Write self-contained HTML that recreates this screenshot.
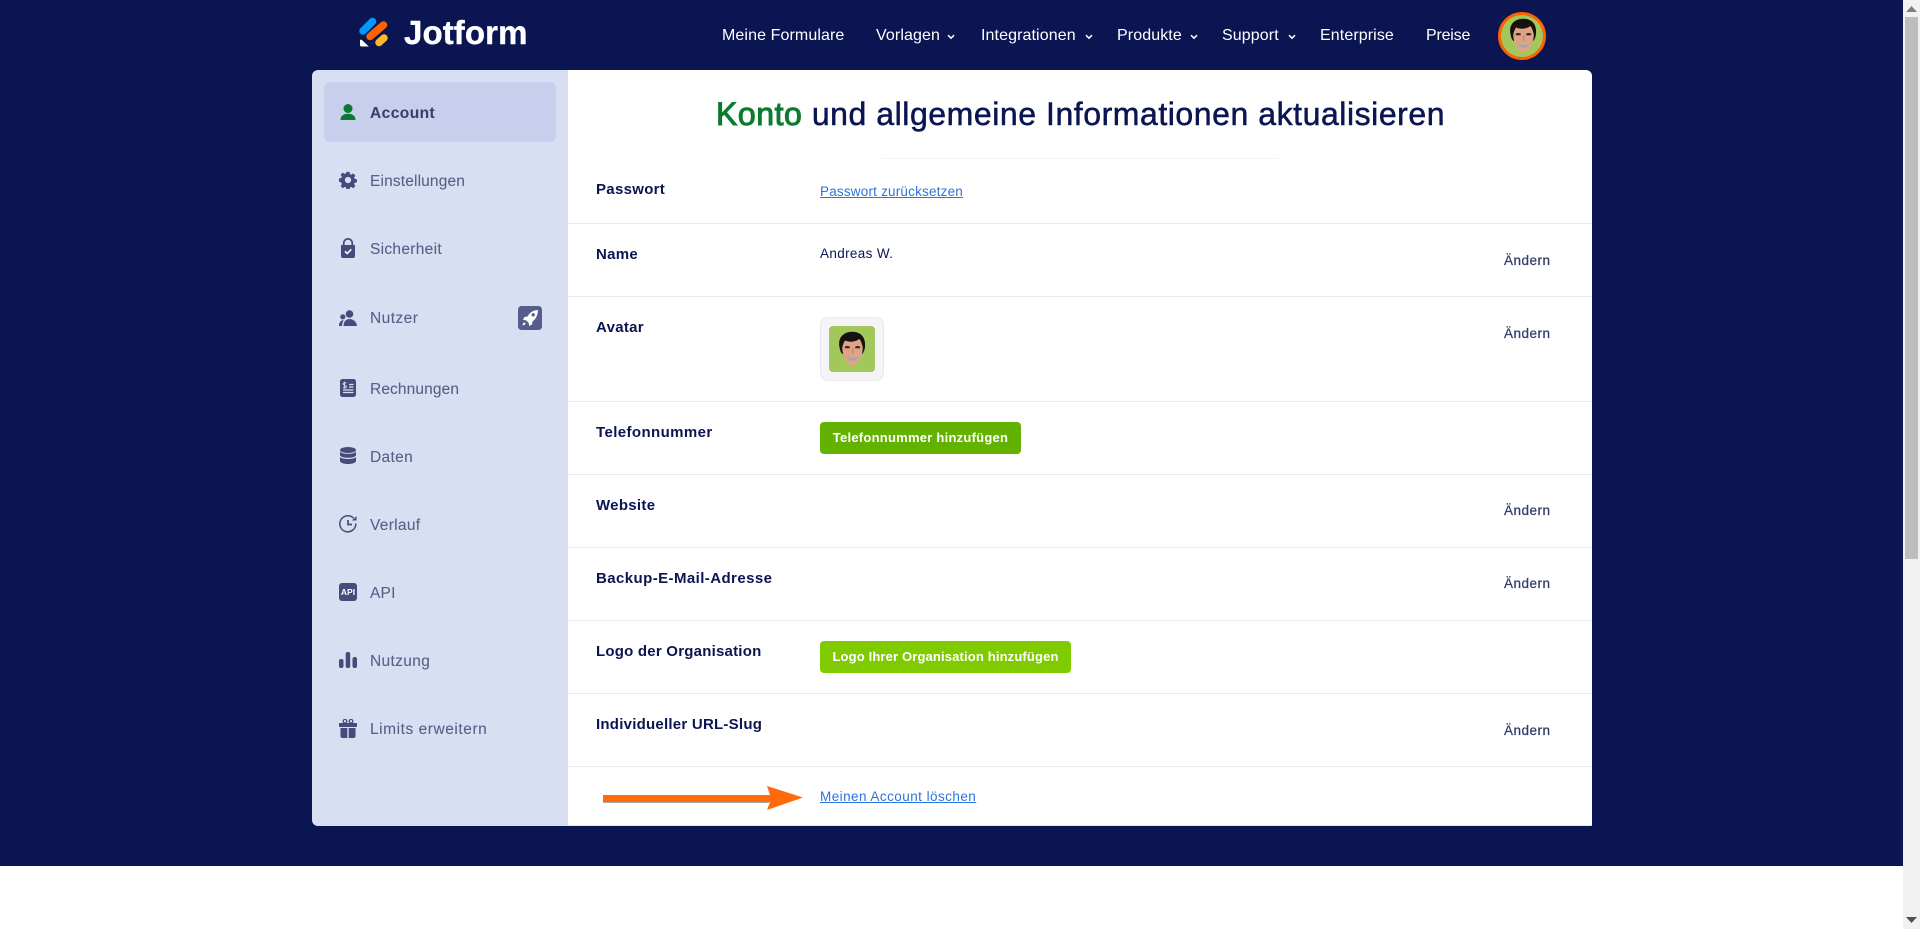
<!DOCTYPE html>
<html lang="de">
<head>
<meta charset="utf-8">
<title>Jotform Konto</title>
<style>
html,body{margin:0;padding:0;width:1920px;height:929px;overflow:hidden;background:#fff;font-family:"Liberation Sans",sans-serif;color:#0a1551}
*{box-sizing:border-box}
.abs,.nav a,.side span,.lb,.val,.chg,.btn{position:absolute;white-space:nowrap}
#bg{position:absolute;left:0;top:0;width:1903px;height:866px;background:#0a1551}
.sb{position:absolute;left:1903px;top:0;width:17px;height:929px;background:#f1f1f1}
.thumb{position:absolute;left:2px;top:17px;width:13px;height:542px;background:#bdbdbd}
.nav a{color:#fff;font-size:16px;letter-spacing:.1px;line-height:20px;top:26px;text-decoration:none}
.chev{position:absolute;top:33px}
.side{position:absolute;left:312px;top:70px;width:256px;height:756px;background:#d9dff2;border-radius:6px 0 0 6px}
.active{position:absolute;left:12px;top:12px;width:232px;height:60px;background:#c8cfed;border-radius:6px}
.it{position:absolute;left:370px;color:#5a5f88;font-size:15.5px;letter-spacing:.2px;line-height:20px;white-space:nowrap;-webkit-text-stroke:.1px currentColor}
.main{position:absolute;left:568px;top:70px;width:1024px;height:756px;background:#fff;border-radius:0 6px 1px 0;border-bottom:1px solid #e9e9ee}
h1{position:absolute;margin:0;left:716px;top:94px;font-size:32px;line-height:40px;font-weight:400;letter-spacing:.55px;-webkit-text-stroke:.5px currentColor;white-space:nowrap;color:#0a1551}
h1 b{font-weight:400;color:#0a7b2f;-webkit-text-stroke:1px #0a7b2f}
.hl{position:absolute;left:881px;top:158px;width:397px;height:1px;background:#f3f3f3}
.ln{position:absolute;left:568px;width:1024px;height:1px;background:#e8e9f2}
.lb{left:596px;font-size:15px;font-weight:700;letter-spacing:.3px;line-height:20px}
.val{left:820px;font-size:13.5px;letter-spacing:.2px;line-height:18px}
.val.a{color:#2a74dd;text-decoration:underline}
.chg{left:1504px;font-size:13.5px;letter-spacing:.5px;line-height:18px;color:#343c6a;-webkit-text-stroke:.25px currentColor}
.btn{left:820px;height:32px;border-radius:4px;color:#fff;font-size:13px;font-weight:700;line-height:32px;text-align:center}
.av{position:absolute;left:820px;top:317px;width:64px;height:64px;background:#f3f3f8;border:1px solid #e8e9f0;border-radius:8px}
.ic{position:absolute;fill:#454b7a}
</style>
</head>
<body>
<svg width="0" height="0" style="position:absolute">
<symbol id="face" viewBox="0 0 46 46">
<path d="M10.300 20C9 11 15 5.800 23 5.700 31.500 5.500 37 11 36 21 35.600 24 34.500 27 33 28H13.500C12 27 10.800 24 10.300 20Z" fill="#17120f"/>
<path d="M13.300 21C14 18.500 14.800 16.500 16 14.500 20.500 16.500 26.500 16 30.500 13 32 15 33 18 33.700 21 34.200 27 31 33.500 28.500 37 26.500 40.200 21.500 40.600 19 37.600 15.500 33.500 13 27 13.300 21Z" fill="#dfa488"/>
<path d="M15.800 20.800c1.500-1 3.500-1 5 0v1.400h-5zM26.200 20.800c1.500-1 3.500-1 5 0v1.400h-5z" fill="#3a2620"/>
<path d="M23.700 22v6" stroke="#c0856c" stroke-width="1.200" fill="none"/>
<path d="M18.200 30.500c3 1.800 7.600 1.800 10.800 0-.8 3.300-3 4.300-5.500 4.300S19 33.800 18.200 30.500Z" fill="#a4a5ac"/>
</symbol>
</svg>

<div id="bg"></div>

<svg class="abs" style="left:358px;top:15px" width="32" height="34" viewBox="358 15 32 34">
<path d="M363 31 372.500 21.500" stroke="#0099ff" stroke-width="7.500" stroke-linecap="round"/>
<path d="M370 36.500 383.500 25" stroke="#ff6100" stroke-width="7.500" stroke-linecap="round"/>
<path d="M379 42.500 384 38" stroke="#ffb629" stroke-width="7.500" stroke-linecap="round"/>
<path d="M360 40.500c0-.8 1-1.300 1.800-.6l7 6.600H361.500C360.500 46.500 360 46 360 45Z" fill="#fff"/>
</svg>
<div class="abs" style="left:404px;top:12px;font-size:33px;font-weight:700;line-height:42px;color:#fff;letter-spacing:.1px;-webkit-text-stroke:.4px #fff">Jotform</div>

<div class="nav">
<a style="left:722px">Meine Formulare</a>
<a style="left:876px">Vorlagen</a>
<a style="left:981px">Integrationen</a>
<a style="left:1117px">Produkte</a>
<a style="left:1222px">Support</a>
<a style="left:1320px">Enterprise</a>
<a style="left:1426px;letter-spacing:-.2px">Preise</a>
</div>
<svg class="chev" style="left:945px" width="12" height="8" viewBox="0 0 12 8"><path d="M3 2.200 6 5.200 9 2.200" stroke="#fff" stroke-width="1.500" fill="none"/></svg>
<svg class="chev" style="left:1083px" width="12" height="8" viewBox="0 0 12 8"><path d="M3 2.200 6 5.200 9 2.200" stroke="#fff" stroke-width="1.500" fill="none"/></svg>
<svg class="chev" style="left:1188px" width="12" height="8" viewBox="0 0 12 8"><path d="M3 2.200 6 5.200 9 2.200" stroke="#fff" stroke-width="1.500" fill="none"/></svg>
<svg class="chev" style="left:1286px" width="12" height="8" viewBox="0 0 12 8"><path d="M3 2.200 6 5.200 9 2.200" stroke="#fff" stroke-width="1.500" fill="none"/></svg>

<div class="abs" style="left:1498px;top:12px;width:48px;height:48px;border-radius:50%;background:#a2c85c;border:3px solid #ff6100;overflow:hidden">
<svg style="position:absolute;left:-1px;top:-2px" width="46" height="46"><use href="#face"/></svg>
</div>

<div class="side"><div class="active"></div></div>
<div class="main"></div>

<!-- sidebar -->
<svg class="ic" style="left:339px;top:103px;fill:#0a7b2f" width="18" height="18" viewBox="0 0 18 18"><circle cx="9" cy="5.500" r="4.500"/><path d="M1.500 17c0-4 3-6.200 7.500-6.200S16.500 13 16.500 17Z"/></svg>
<div class="it" style="top:104px;color:#3a3f6b;font-weight:700;letter-spacing:.45px">Account</div>

<svg class="ic" style="left:339px;top:171px" width="18" height="18" viewBox="0 0 18 18"><path fill-rule="evenodd" d="M7.300 0h3.400l.5 2.500 1.400.6 2.200-1.400 2.400 2.400-1.400 2.200.6 1.400 2.500.5v3.400l-2.500.5-.6 1.400 1.400 2.200-2.400 2.400-2.200-1.400-1.400.6-.5 2.500H7.300l-.5-2.500-1.400-.6-2.200 1.400-2.400-2.400 1.400-2.200-.6-1.400L-1 10.700V7.300l2.500-.5.6-1.400L.7 3.200l2.400-2.400 2.200 1.400 1.400-.6ZM9 5.500a3.500 3.500 0 1 0 0 7 3.500 3.500 0 0 0 0-7Z" transform="translate(.9 .9) scale(.9)"/></svg>
<div class="it" style="top:172px;letter-spacing:.15px">Einstellungen</div>

<svg class="ic" style="left:339px;top:238px" width="18" height="20" viewBox="0 0 18 20"><path fill-rule="evenodd" d="M3.800 7V5.200a5.200 5.200 0 0 1 10.400 0V7H16v11a2 2 0 0 1-2 2H4a2 2 0 0 1-2-2V7ZM5.600 7h6.800V5.200a3.400 3.400 0 0 0-6.800 0Z"/><path d="M6 13.300l2.200 2.200L12.300 11.300" stroke="#fff" stroke-width="1.500" fill="none"/></svg>
<div class="it" style="top:240px;letter-spacing:.3px">Sicherheit</div>

<svg class="ic" style="left:339px;top:310px" width="18" height="16" viewBox="0 0 18 16"><circle cx="10.500" cy="4" r="3.800"/><path d="M4.500 16c0-4.500 2.500-7 6-7s7 2.500 7.500 7Z"/><circle cx="3.800" cy="6.800" r="2.600"/><path d="M0 16c0-3.500 1.500-5.500 4.800-6-1 1.500-1.800 3.500-1.800 6Z"/></svg>
<div class="it" style="top:309px;letter-spacing:.45px">Nutzer</div>

<svg class="ic" style="left:518px;top:306px;fill:#565d8c" width="24" height="24" viewBox="0 0 24 24"><rect width="24" height="24" rx="3.500"/><path d="M20 4c-5 .300-8 2.300-10.500 6.500L6.500 11 5 14l3 .2 2.800 2.800.2 3 3-1.500.5-3C18 13 19.800 9 20 4Z" fill="#fff"/><circle cx="15.200" cy="8.800" r="1.700" fill="#565d8c"/><path d="M6 16.500c.9 0 1.500.6 1.500 1.500-.5.700-1.700 1.100-3 1.300.2-1.300.8-2.500 1.500-2.800Z" fill="#fff"/></svg>

<svg class="ic" style="left:340px;top:379px" width="16" height="18" viewBox="0 0 16 18"><rect width="16" height="18" rx="2.500"/><path d="M9 5.500h4.500M9 8h4.500M3 11h10.500M3 13.500h10.500" stroke="#d9dff2" stroke-width="1.200"/><path d="M6.200 4.200C5.500 3.400 3 3.400 3 5s3.300 1 3.300 2.700S3.700 9.300 3 8.300M4.600 2.800v6.800" stroke="#d9dff2" stroke-width=".9" fill="none"/></svg>
<div class="it" style="top:380px;letter-spacing:.12px">Rechnungen</div>

<svg class="ic" style="left:340px;top:447px" width="16" height="17" viewBox="0 0 16 17"><ellipse cx="8" cy="3" rx="8" ry="3"/><path d="M0 4.700C1.500 6.300 5 6.800 8 6.800s6.500-.5 8-2.100V8c0 1.700-3.600 2.800-8 2.800S0 9.700 0 8Z"/><path d="M0 10C1.500 11.500 5 12 8 12s6.500-.5 8-2v4c0 1.700-3.600 3-8 3s-8-1.300-8-3Z"/></svg>
<div class="it" style="top:448px;letter-spacing:.35px">Daten</div>

<svg class="ic" style="left:339px;top:515px;fill:none" width="18" height="18" viewBox="0 0 18 18"><path d="M16.800 8.500A8 8 0 1 1 14.500 3.200" stroke="#454b7a" stroke-width="1.500"/><path d="M17.500 1v4.500H13Z" fill="#454b7a"/><path d="M9 5v4.500h4" stroke="#454b7a" stroke-width="1.700"/></svg>
<div class="it" style="top:516px;letter-spacing:.3px">Verlauf</div>

<svg class="ic" style="left:339px;top:583px" width="18" height="18" viewBox="0 0 18 18"><rect width="18" height="18" rx="3"/><text x="9" y="12" text-anchor="middle" font-family="Liberation Sans,sans-serif" font-size="8.500" font-weight="700" fill="#fff">API</text></svg>
<div class="it" style="top:584px">API</div>

<svg class="ic" style="left:339px;top:652px" width="18" height="16" viewBox="0 0 18 16"><rect x="0" y="7" width="4.500" height="9" rx="2"/><rect x="6.700" y="0" width="4.500" height="16" rx="2"/><rect x="13.500" y="5" width="4.500" height="11" rx="2"/></svg>
<div class="it" style="top:652px;letter-spacing:.35px">Nutzung</div>

<svg class="ic" style="left:339px;top:719px" width="18" height="19" viewBox="0 0 18 19"><rect x="0" y="4" width="18" height="4" rx=".8"/><path d="M1.500 9h6.800v10H3.500a2 2 0 0 1-2-2ZM9.700 9h6.800v8a2 2 0 0 1-2 2H9.700Z"/><circle cx="6" cy="2.200" r="1.800" fill="none" stroke="#454b7a" stroke-width="1.300"/><circle cx="12" cy="2.200" r="1.800" fill="none" stroke="#454b7a" stroke-width="1.300"/></svg>
<div class="it" style="top:720px;letter-spacing:.55px">Limits erweitern</div>

<!-- content -->
<h1><b>Konto</b> und allgemeine Informationen aktualisieren</h1>
<div class="hl"></div>

<div class="ln" style="top:223px"></div>
<div class="ln" style="top:296px"></div>
<div class="ln" style="top:401px"></div>
<div class="ln" style="top:474px"></div>
<div class="ln" style="top:547px"></div>
<div class="ln" style="top:620px"></div>
<div class="ln" style="top:693px"></div>
<div class="ln" style="top:766px"></div>

<div class="lb" style="top:180px">Passwort</div>
<div class="lb" style="top:245px">Name</div>
<div class="lb" style="top:318px">Avatar</div>
<div class="lb" style="top:423px;letter-spacing:.4px">Telefonnummer</div>
<div class="lb" style="top:496px">Website</div>
<div class="lb" style="top:569px;letter-spacing:.42px">Backup-E-Mail-Adresse</div>
<div class="lb" style="top:642px;letter-spacing:.22px">Logo der Organisation</div>
<div class="lb" style="top:715px;letter-spacing:.24px">Individueller URL-Slug</div>

<div class="val a" style="top:183px">Passwort zurücksetzen</div>
<div class="val" style="top:245px;letter-spacing:.35px">Andreas W.</div>
<div class="av">
<div style="position:absolute;left:8px;top:8px;width:46px;height:46px;background:#a2c85c;border-radius:4px;overflow:hidden"><svg width="46" height="46"><use href="#face"/></svg></div>
</div>
<div class="btn" style="top:422px;width:201px;background:#64b200;letter-spacing:.25px">Telefonnummer hinzufügen</div>
<div class="btn" style="top:641px;width:251px;background:#7fcb00;letter-spacing:.15px">Logo Ihrer Organisation hinzufügen</div>
<div class="val a" style="top:788px;letter-spacing:.45px">Meinen Account löschen</div>

<div class="chg" style="top:252px">Ändern</div>
<div class="chg" style="top:325px">Ändern</div>
<div class="chg" style="top:502px">Ändern</div>
<div class="chg" style="top:575px">Ändern</div>
<div class="chg" style="top:722px">Ändern</div>

<svg class="abs" style="left:600px;top:782px" width="208" height="32" viewBox="600 782 208 32">
<rect x="603" y="796" width="166" height="7" fill="#a8a8a8"/>
<path d="M603 795H770L767 786 803 797.500 767 810 770 802H603Z" fill="#ff6a0d"/>
</svg>

<div class="sb">
<svg style="position:absolute;left:3px;top:6px" width="11" height="7" viewBox="0 0 11 7"><path d="M5.500 0 11 6H0Z" fill="#7f7f7f"/></svg>
<div class="thumb"></div>
<svg style="position:absolute;left:3px;top:916px" width="11" height="7" viewBox="0 0 11 7"><path d="M0 1h11L5.500 7Z" fill="#505050"/></svg>
</div>
</body>
</html>
